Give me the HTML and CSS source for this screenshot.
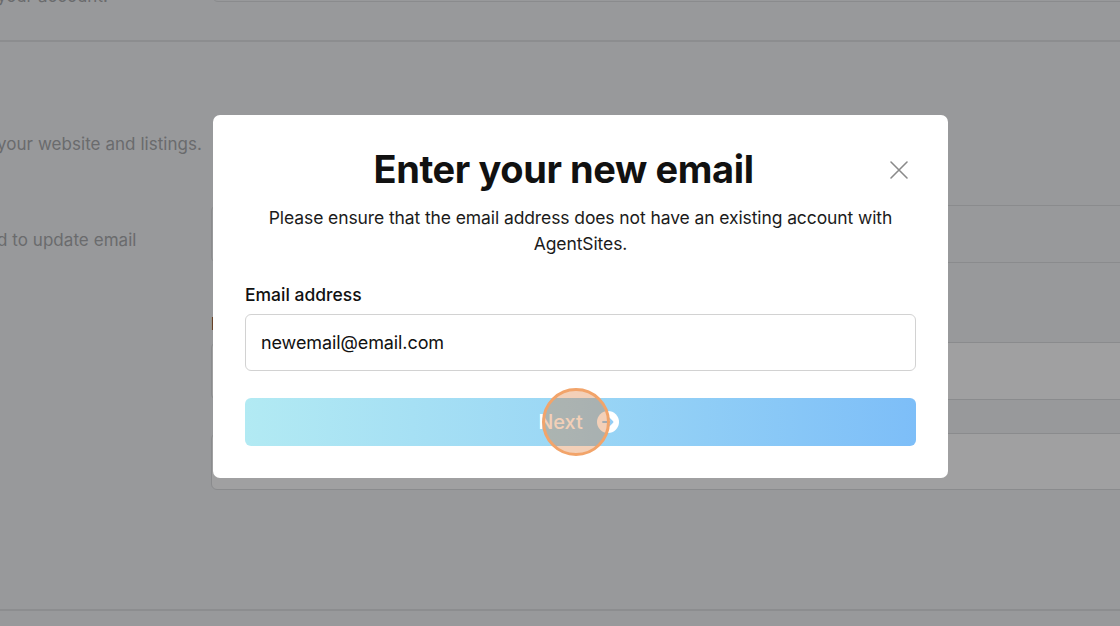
FILE: index.html
```html
<!DOCTYPE html>
<html lang="en">
<head>
<meta charset="utf-8">
<title>Enter your new email</title>
<link rel="stylesheet" href="styles.css">
</head>
<body>
<div class="page">
  <section class="sec sec-top">
    <div class="left"><p class="hint hint-top">your account.</p></div>
    <div class="right"><div class="field field-top"></div></div>
  </section>
  <section class="sec sec-main">
    <div class="left">
      <p class="hint hint-1">your website and listings.</p>
      <p class="hint hint-2">d to update email</p>
    </div>
    <div class="right">
      <div class="field field-disabled"></div>
      <div class="bg-label">Email</div>
      <div class="field field-2"></div>
      <div class="field field-3"></div>
    </div>
  </section>
</div>

<div class="modal" role="dialog" aria-labelledby="modal-title">
  <div class="head">
    <h1 id="modal-title" class="title">Enter your new email</h1>
    <button class="close" aria-label="Close">
      <svg viewBox="0 0 20 20" width="20" height="20"><path d="M2 2 L18 18 M18 2 L2 18" stroke="#8a8a8a" stroke-width="1.6" fill="none" stroke-linecap="round"/></svg>
    </button>
  </div>
  <p class="desc">Please ensure that the email address does not have an existing account with AgentSites.</p>
  <label class="label" for="email">Email address</label>
  <div class="input">newemail@email.com</div>
  <button class="next">
    <span>Next</span>
    <svg class="arrow" viewBox="0 0 22 22" width="22" height="22"><circle cx="11" cy="11" r="11" fill="#fff"/><path d="M6 11 H15.5 M11.5 7 L15.5 11 L11.5 15" stroke="#94cdf5" stroke-width="1.8" fill="none" stroke-linecap="round" stroke-linejoin="round"/></svg>
  </button>
</div>
<div class="click-ring"></div>
</body>
</html>
```

FILE: styles.css
```css
* { box-sizing: border-box; }
html, body { margin: 0; padding: 0; }
body {
  width: 1120px;
  height: 626px;
  overflow: hidden;
  background: #98999b;
  font-family: Inter, "Noto Sans", sans-serif;
}
.page { width: 1120px; }
.sec {
  display: grid;
  grid-template-columns: 211px 1fr;
  border-bottom: 2px solid #8c8d8f;
}
.sec-top { height: 42px; }
.sec-main { height: 569px; }
.left { min-width: 0; }
.right { min-width: 0; }
.hint {
  margin: 0;
  font-size: 17px;
  line-height: 24px;
  color: #6a6b6d;
  white-space: nowrap;
  text-indent: -3px;
  letter-spacing: 0.05px;
}
.hint-top { margin-top: -16px; }
.hint-1 { margin-top: 90px; }
.hint-2 { margin-top: 72px; }
.field {
  width: 1000px;
  border: 1px solid #8a8b8d;
  border-radius: 6px;
  background: #a0a0a1;
}
.field-top { height: 50px; margin-top: -48px; margin-left: 1px; background: #98999b; }
.field-disabled { height: 58px; margin-top: 163px; background: #98999b; }
.bg-label {
  margin-top: 51px;
  font-size: 17px;
  line-height: 20px;
  font-weight: 600;
  color: #2a2a2a;
}
.field-2 { height: 58px; margin-top: 8px; }
.field-3 { height: 57px; margin-top: 33px; }

.modal {
  position: absolute;
  left: 213px;
  top: 115px;
  width: 735px;
  height: 363px;
  background: #fff;
  border-radius: 7px;
  padding: 30px 32px 32px;
  display: flex;
  flex-direction: column;
}
.head {
  display: flex;
  align-items: center;
}
.title {
  flex: 1;
  margin: 0;
  text-align: center;
  font-size: 38px;
  line-height: 48px;
  font-weight: 700;
  color: #111;
  letter-spacing: -0.4px;
}
.close {
  width: 34px;
  height: 20px;
  padding: 0;
  border: 0;
  background: none;
  display: flex;
  justify-content: center;
  margin-top: 2px;
}
.desc {
  margin: 12px 0 0;
  padding: 0 8px;
  text-align: center;
  font-size: 17.5px;
  line-height: 26px;
  color: #1b1b1b;
  letter-spacing: -0.1px;
}
.label {
  margin-top: 27px;
  font-size: 17.5px;
  line-height: 22px;
  font-weight: 500;
  color: #111;
  letter-spacing: 0;
}
.input {
  margin-top: 8px;
  height: 57px;
  border: 1px solid #d2d2d2;
  border-radius: 6px;
  padding: 0 15px;
  display: flex;
  align-items: center;
  font-size: 18px;
  color: #111;
  letter-spacing: -0.1px;
}
.next {
  margin-top: 27px;
  height: 48px;
  border: 0;
  border-radius: 6px;
  background: linear-gradient(90deg, #b2eaf3 0%, #9ad6f5 50%, #7dbef8 100%);
  display: flex;
  align-items: center;
  justify-content: center;
  gap: 14px;
  font-family: inherit;
  font-size: 20px;
  font-weight: 500;
  color: #fff;
  padding: 0 4px 0 0;
}
.arrow { display: block; }
.click-ring {
  position: absolute;
  left: 542px;
  top: 388px;
  width: 68px;
  height: 68px;
  border-radius: 50%;
  border: 3px solid #f2a46a;
  background: rgba(213, 86, 0, 0.28);
}
```
